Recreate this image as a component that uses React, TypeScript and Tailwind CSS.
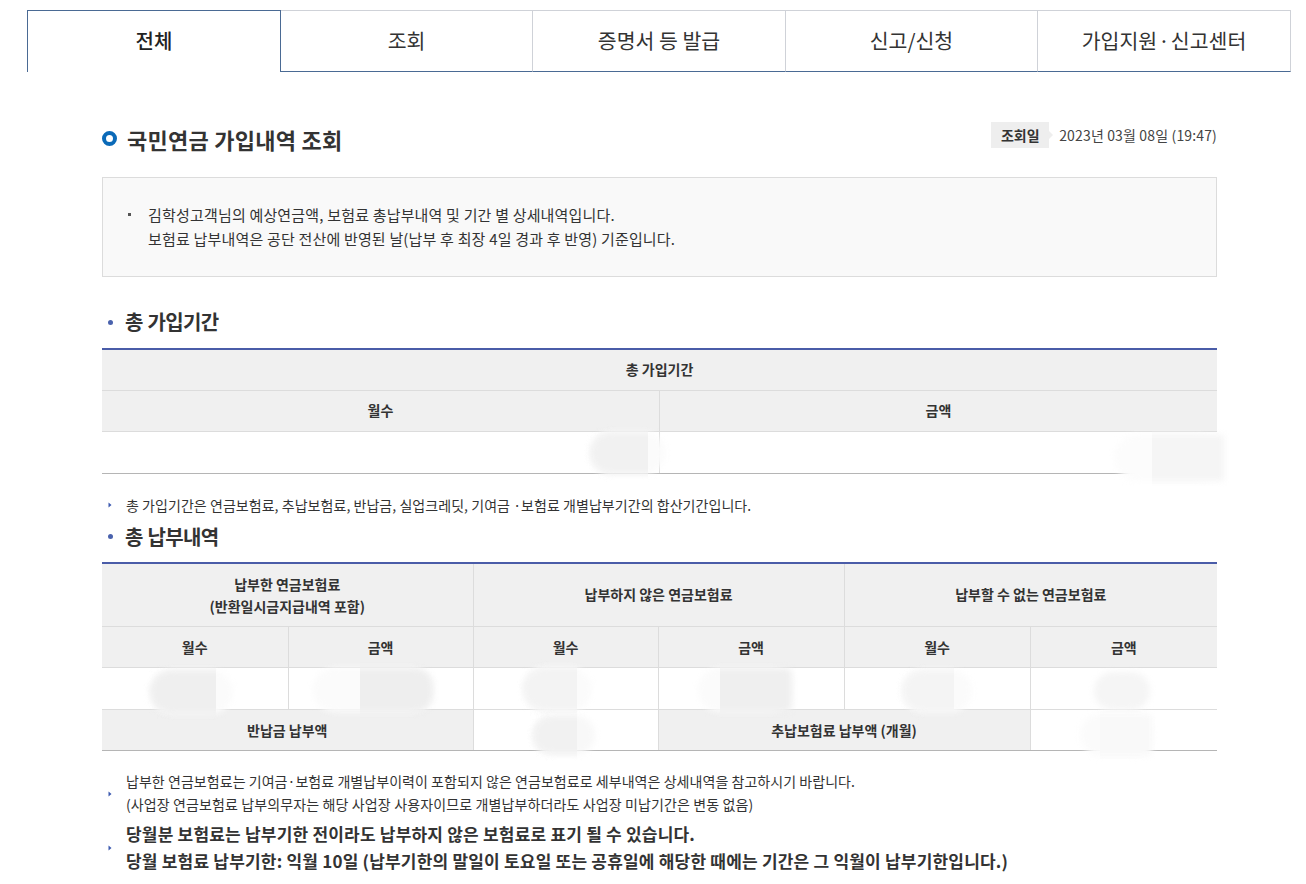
const th = "bg-[#f0f0f0] border-b border-r border-[#dcdcdc] last:border-r-0 text-[14px] font-bold text-[#333] text-center p-0";
const td = "bg-white border-b border-r border-[#dcdcdc] last:border-r-0 p-0";

function Blob({ outer, light, dark }: { outer: string; light: string; dark: string }) {
  return (
    <div className={`absolute ${outer}`}>
      <div className={`absolute inset-0 rounded-[22px] blur-[3px] ${light}`} />
      <div className={`absolute top-0 bottom-0 blur-[3px] ${dark}`} />
    </div>
  );
}

function SubHeading({ children, className }: { children: string; className: string }) {
  return (
    <div className={`flex items-center h-[30px] ${className}`}>
      <span className="ml-[6px] w-[5px] h-[5px] rounded-full bg-[#4a62ad]" />
      <h3 className="ml-[12px] text-[20px] leading-[30px] font-bold text-[#333] tracking-[-0.7px] [word-spacing:1px]">{children}</h3>
    </div>
  );
}

function Arrow() {
  return (
    <svg width="4" height="6" viewBox="0 0 4 6" className="shrink-0">
      <path d="M0.5 0.5 L3.5 3 L0.5 5.5 Z" fill="#3d5bb0" />
    </svg>
  );
}

const tabBase = "h-[62px] pb-[2px] border-t border-r border-t-[#cfd2d8] border-r-[#cfd2d8] border-b border-b-[#4a6a94] flex items-center justify-center text-[20.5px] text-[#333]";

export default function App() {
  return (
    <div className="relative w-[1306px] h-[884px] overflow-hidden bg-white text-[#333] font-['Noto_Sans_CJK_KR','Noto_Sans',sans-serif]">
      <div className="pt-[10px] pl-[27px] pr-[15px] flex h-[72px]">
        <div className="w-[254px] h-[62px] pb-[2px] border-t border-l border-r border-[#4a6a94] flex items-center justify-center text-[20px] font-medium text-[#222]">전체</div>
        <div className={`w-[252px] ${tabBase}`}>조회</div>
        <div className={`w-[253px] ${tabBase}`}>증명서 등 발급</div>
        <div className={`w-[252px] ${tabBase}`}>신고/신청</div>
        <div className={`flex-1 ${tabBase} [word-spacing:-3.5px]`}>가입지원 · 신고센터</div>
      </div>

      <div className="mx-[102px] w-[1115px]">
        <div className="flex justify-between h-[105px] pt-[50px]">
          <div className="flex items-start">
            <span className="mt-[9px] w-[15px] h-[15px] rounded-full border-[4px] border-[#0b6ab8]" />
            <h2 className="ml-[10px] -mt-[1px] text-[22px] leading-[36px] font-bold text-[#333] tracking-[0.25px]">국민연금 가입내역 조회</h2>
          </div>
          <div className="flex items-start">
            <span className="relative w-[58px] h-[26px] bg-[#eeeeee] flex items-center justify-center text-[14px] font-bold text-[#333]">
              조회일
              <span className="absolute left-full top-[9px] border-y-[4px] border-y-transparent border-l-[4px] border-l-[#eeeeee]" />
            </span>
            <span className="ml-[10px] h-[26px] leading-[26px] text-[14px] text-[#444] tracking-[0.15px]">2023년 03월 08일 (19:47)</span>
          </div>
        </div>

        <div className="h-[100px] border border-[#dcdcdc] bg-[#f9f9f9] flex pt-[25px] pl-[25px]">
          <span className="mt-[10px] w-[3px] h-[3px] bg-[#555]" />
          <p className="ml-[17px] -mt-[0.5px] text-[15px] leading-[24px] text-[#333] tracking-[0.18px]">
            김학성고객님의 예상연금액, 보험료 총납부내역 및 기간 별 상세내역입니다.
            <br />
            보험료 납부내역은 공단 전산에 반영된 날(납부 후 최장 4일 경과 후 반영) 기준입니다.
          </p>
        </div>

        <SubHeading className="mt-[30px]">총 가입기간</SubHeading>

        <table className="mt-[11px] w-full table-fixed border-collapse border-t-2 border-[#4a5ca8]">
          <tbody>
            <tr className="h-[41px]">
              <th colSpan={2} className={th}>총 가입기간</th>
            </tr>
            <tr className="h-[41px]">
              <th className={th}>월수</th>
              <th className={th}>금액</th>
            </tr>
            <tr className="h-[42px]">
              <td className="border-b border-r border-b-[#b5b5b5] border-r-[#dcdcdc] p-0" />
              <td className="border-b border-b-[#b5b5b5] p-0" />
            </tr>
          </tbody>
        </table>

        <div className="mt-[21px] h-[20px] flex items-center text-[14px] text-[#333]">
          <span className="ml-[6px] mr-[14px]"><Arrow /></span>
          <p className="leading-[20px] tracking-[0.05px]">총 가입기간은 연금보험료, 추납보험료, 반납금, 실업크레딧, 기여금 ·보험료 개별납부기간의 합산기간입니다.</p>
        </div>

        <SubHeading className="mt-[7px]">총 납부내역</SubHeading>

        <table className="mt-[10px] w-full table-fixed border-collapse border-t-2 border-[#4a5ca8]">
          <colgroup>
            <col className="w-[186px]" />
            <col className="w-[185px]" />
            <col className="w-[185px]" />
            <col className="w-[186px]" />
            <col className="w-[186px]" />
            <col className="w-[187px]" />
          </colgroup>
          <tbody>
            <tr className="h-[64px]">
              <th colSpan={2} className={`${th} leading-[22px]`}>
                납부한 연금보험료
                <br />
                (반환일시금지급내역 포함)
              </th>
              <th colSpan={2} className={th}>납부하지 않은 연금보험료</th>
              <th colSpan={2} className={th}>납부할 수 없는 연금보험료</th>
            </tr>
            <tr className="h-[41px]">
              <th className={th}>월수</th>
              <th className={th}>금액</th>
              <th className={th}>월수</th>
              <th className={th}>금액</th>
              <th className={th}>월수</th>
              <th className={th}>금액</th>
            </tr>
            <tr className="h-[42px]">
              <td className={td} />
              <td className={td} />
              <td className={td} />
              <td className={td} />
              <td className={td} />
              <td className={td} />
            </tr>
            <tr className="h-[41px]">
              <th colSpan={2} className="bg-[#f0f0f0] border-b border-r border-b-[#b5b5b5] border-r-[#dcdcdc] text-[14px] font-bold text-[#333] p-0">반납금 납부액</th>
              <td className="border-b border-r border-b-[#b5b5b5] border-r-[#dcdcdc] p-0" />
              <th colSpan={2} className="bg-[#f0f0f0] border-b border-r border-b-[#b5b5b5] border-r-[#dcdcdc] text-[14px] font-bold text-[#333] p-0">추납보험료 납부액 (개월)</th>
              <td className="border-b border-b-[#b5b5b5] p-0" />
            </tr>
          </tbody>
        </table>

        <div className="mt-[19px] flex items-center text-[14px] text-[#333]">
          <span className="ml-[6px] mr-[14px] mt-[2px]"><Arrow /></span>
          <p className="leading-[23px] tracking-[0.05px]">
            납부한 연금보험료는 기여금·보험료 개별납부이력이 포함되지 않은 연금보험료로 세부내역은 상세내역을 참고하시기 바랍니다.
            <br />
            <span className="tracking-[0.12px]">(사업장 연금보험료 납부의무자는 해당 사업장 사용자이므로 개별납부하더라도 사업장 미납기간은 변동 없음)</span>
          </p>
        </div>
        <div className="mt-[4px] flex items-center text-[17px] font-bold text-[#333]">
          <span className="ml-[6px] mr-[14px] mt-[2px]"><Arrow /></span>
          <p className="leading-[27px] whitespace-nowrap tracking-[0.2px]">
            당월분 보험료는 납부기한 전이라도 납부하지 않은 보험료로 표기 될 수 있습니다.
            <br />
            당월 보험료 납부기한: 익월 10일 (납부기한의 말일이 토요일 또는 공휴일에 해당한 때에는 기간은 그 익월이 납부기한입니다.)
          </p>
        </div>
      </div>

      <Blob outer="left-[590px] top-[432px] w-[75px] h-[42px]" light="bg-[#fbfbfb]" dark="left-0 w-[78px] rounded-l-[22px] bg-[#f1f1f1] [clip-path:inset(-10px_20px_-10px_-10px)]" />
      <Blob outer="left-[1115px] top-[435px] w-[105px] h-[46px]" light="bg-[#fcfcfc]" dark="left-[17px] w-[92px] bg-[#f5f5f5] [clip-path:inset(-10px_-10px_-10px_20px)]" />
      <Blob outer="left-[150px] top-[670px] w-[83px] h-[44px]" light="bg-[#fbfbfb]" dark="left-0 w-[86px] rounded-l-[22px] bg-[#efefef] [clip-path:inset(-10px_20px_-10px_-10px)]" />
      <Blob outer="left-[313px] top-[668px] w-[120px] h-[44px]" light="bg-[#fbfbfb]" dark="left-[27px] w-[93px] rounded-r-[18px] bg-[#eeeeee] [clip-path:inset(-10px_-10px_-10px_20px)]" />
      <Blob outer="left-[523px] top-[667px] w-[69px] h-[44px]" light="bg-[#fbfbfb]" dark="left-0 w-[74px] rounded-l-[22px] bg-[#f3f3f3] [clip-path:inset(-10px_20px_-10px_-10px)]" />
      <Blob outer="left-[698px] top-[668px] w-[94px] h-[44px]" light="bg-[#fbfbfb]" dark="left-[2px] w-[92px] rounded-r-[6px] bg-[#efefef] [clip-path:inset(-10px_-10px_-10px_20px)]" />
      <Blob outer="left-[902px] top-[670px] w-[70px] h-[42px]" light="bg-[#fbfbfb]" dark="left-0 w-[72px] rounded-l-[21px] bg-[#f4f4f4] [clip-path:inset(-10px_20px_-10px_-10px)]" />
      <Blob outer="left-[1094px] top-[672px] w-[56px] h-[38px]" light="bg-[#f5f5f5]" dark="left-0 w-0" />
      <Blob outer="left-[533px] top-[716px] w-[62px] h-[38px]" light="bg-[#f8f8f8]" dark="left-0 w-[64px] rounded-l-[19px] bg-[#f1f1f1] [clip-path:inset(-10px_20px_-10px_-10px)]" />
      <Blob outer="left-[1080px] top-[714px] w-[72px] h-[42px]" light="bg-[#fbfbfb]" dark="left-0 w-[72px] rounded-r-[4px] bg-[#f9f9f9] [clip-path:inset(-10px_-10px_-10px_20px)]" />
    </div>
  );
}
